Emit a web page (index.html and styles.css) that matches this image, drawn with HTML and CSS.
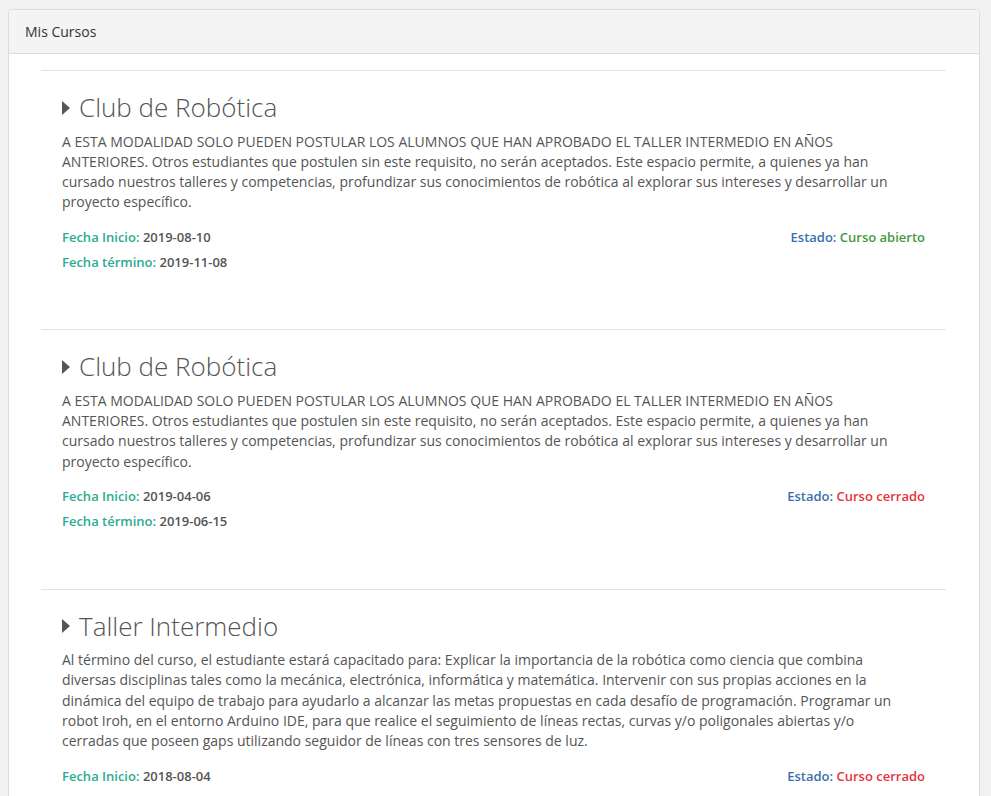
FILE: index.html
```html
<!DOCTYPE html>
<html lang="es">
<head>
<meta charset="utf-8">
<title>Mis Cursos</title>
<link rel="stylesheet" href="styles.css">
</head>
<body>
<div class="page">
  <div class="panel">
    <div class="panel-heading">Mis Cursos</div>
    <div class="panel-body">
      <div class="course">
        <h3 class="course-title"><svg class="caret" width="8" height="14" viewBox="0 0 8 14"><path d="M0 0 L8 7 L0 14 Z"/></svg>Club de Robótica</h3>
        <p class="course-desc">A ESTA MODALIDAD SOLO PUEDEN POSTULAR LOS ALUMNOS QUE HAN APROBADO EL TALLER INTERMEDIO EN AÑOS ANTERIORES. Otros estudiantes que postulen sin este requisito, no serán aceptados. Este espacio permite, a quienes ya han cursado nuestros talleres y competencias, profundizar sus conocimientos de robótica al explorar sus intereses y desarrollar un proyecto específico.</p>
        <div class="meta-row">
          <span><span class="label">Fecha Inicio:</span> <span class="value">2019-08-10</span></span>
          <span><span class="estado">Estado:</span> <span class="open">Curso abierto</span></span>
        </div>
        <div class="meta-row">
          <span><span class="label">Fecha término:</span> <span class="value">2019-11-08</span></span>
        </div>
      </div>
      <div class="course">
        <h3 class="course-title"><svg class="caret" width="8" height="14" viewBox="0 0 8 14"><path d="M0 0 L8 7 L0 14 Z"/></svg>Club de Robótica</h3>
        <p class="course-desc">A ESTA MODALIDAD SOLO PUEDEN POSTULAR LOS ALUMNOS QUE HAN APROBADO EL TALLER INTERMEDIO EN AÑOS ANTERIORES. Otros estudiantes que postulen sin este requisito, no serán aceptados. Este espacio permite, a quienes ya han cursado nuestros talleres y competencias, profundizar sus conocimientos de robótica al explorar sus intereses y desarrollar un proyecto específico.</p>
        <div class="meta-row">
          <span><span class="label">Fecha Inicio:</span> <span class="value">2019-04-06</span></span>
          <span><span class="estado">Estado:</span> <span class="closed">Curso cerrado</span></span>
        </div>
        <div class="meta-row">
          <span><span class="label">Fecha término:</span> <span class="value">2019-06-15</span></span>
        </div>
      </div>
      <div class="course">
        <h3 class="course-title"><svg class="caret" width="8" height="14" viewBox="0 0 8 14"><path d="M0 0 L8 7 L0 14 Z"/></svg>Taller Intermedio</h3>
        <p class="course-desc">Al término del curso, el estudiante estará capacitado para: Explicar la importancia de la robótica como ciencia que combina diversas disciplinas tales como la mecánica, electrónica, informática y matemática. Intervenir con sus propias acciones en la dinámica del equipo de trabajo para ayudarlo a alcanzar las metas propuestas en cada desafío de programación. Programar un robot Iroh, en el entorno Arduino IDE, para que realice el seguimiento de líneas rectas, curvas y/o poligonales abiertas y/o cerradas que poseen gaps utilizando seguidor de líneas con tres sensores de luz.</p>
        <div class="meta-row">
          <span><span class="label">Fecha Inicio:</span> <span class="value">2018-08-04</span></span>
          <span><span class="estado">Estado:</span> <span class="closed">Curso cerrado</span></span>
        </div>
      </div>
    </div>
  </div>
</div>
</body>
</html>
```
FILE: styles.css
```css
html, body {
  margin: 0;
  padding: 0;
  background: #f1f1f1;
  font-family: "Open Sans", "Liberation Sans", sans-serif;
  color: #555;
}
.page {
  padding: 9px 11px 0 8px;
  height: 796px;
  box-sizing: border-box;
  overflow: hidden;
}
.panel {
  background: #fff;
  border: 1px solid #dcdcdc;
  border-radius: 4px;
}
.panel-heading {
  background: #f4f4f4;
  border-bottom: 1px solid #dcdcdc;
  border-radius: 4px 4px 0 0;
  height: 43px;
  line-height: 43px;
  padding: 0 16px;
  font-size: 14px;
  color: #333;
}
.panel-body {
  padding: 16px 33px 0 32px;
}
.course {
  border-top: 1px solid #e3e3e3;
  padding: 0 21px 54.5px 21px;
}
.course-title {
  margin: 22px 0 10px 0;
  font-size: 26px;
  font-weight: 300;
  line-height: 28.6px;
  color: #555;
  display: flex;
  align-items: center;
}
.caret {
  fill: #555;
  margin: 1px 9px 0 0;
  flex: none;
}
.course-desc {
  margin: 0 15px 12px 0;
  font-size: 14px;
  line-height: 20.3px;
  color: #555;
}
.meta-row {
  display: flex;
  justify-content: space-between;
  font-size: 13px;
  font-weight: 600;
  line-height: 25px;
}
.label { color: #2bab92; }
.value { color: #555; }
.estado { color: #3b6fad; }
.open { color: #3f9b3f; }
.closed { color: #e8313b; }
```
